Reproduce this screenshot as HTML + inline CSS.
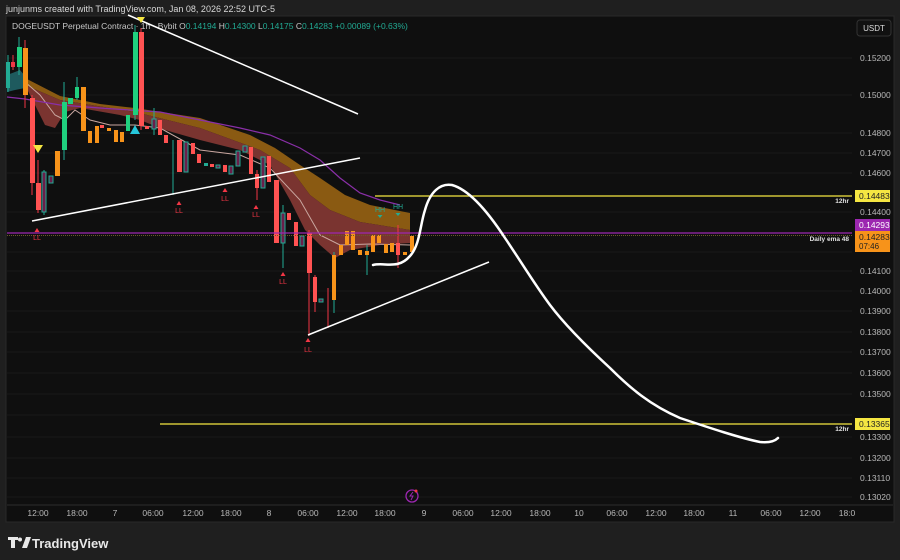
<!DOCTYPE html>
<html><head><meta charset="utf-8"><style>
html,body{margin:0;padding:0;width:900px;height:560px;background:#1f1f1f;overflow:hidden;font-family:"Liberation Sans",sans-serif}
svg{position:absolute;left:0;top:0}
</style></head><body>
<svg width="900" height="560" xmlns="http://www.w3.org/2000/svg" font-family="Liberation Sans, sans-serif">
<rect x="0" y="0" width="900" height="560" fill="#1f1f1f"/>
<text x="6" y="12" fill="#d8d8d8" font-size="9">junjunms created with TradingView.com, Jan 08, 2026 22:52 UTC-5</text>
<rect x="6" y="16" width="888" height="506" fill="#0f0f0f" stroke="#2a2a2a"/>
<line x1="7" y1="505" x2="893" y2="505" stroke="#2c2c2c"/>
<!-- grid -->
<g stroke="#191919" stroke-width="1">
<line x1="7" y1="58" x2="852" y2="58"/><line x1="7" y1="95" x2="852" y2="95"/><line x1="7" y1="133" x2="852" y2="133"/><line x1="7" y1="153" x2="852" y2="153"/><line x1="7" y1="173" x2="852" y2="173"/><line x1="7" y1="212" x2="852" y2="212"/><line x1="7" y1="252" x2="852" y2="252"/><line x1="7" y1="271" x2="852" y2="271"/><line x1="7" y1="291" x2="852" y2="291"/><line x1="7" y1="311" x2="852" y2="311"/><line x1="7" y1="332" x2="852" y2="332"/><line x1="7" y1="352" x2="852" y2="352"/><line x1="7" y1="373" x2="852" y2="373"/><line x1="7" y1="394" x2="852" y2="394"/><line x1="7" y1="415" x2="852" y2="415"/><line x1="7" y1="437" x2="852" y2="437"/><line x1="7" y1="458" x2="852" y2="458"/><line x1="7" y1="478" x2="852" y2="478"/><line x1="7" y1="497" x2="852" y2="497"/>
</g>
<text x="12" y="29" fill="#c8c8c8" font-size="8.5">DOGEUSDT Perpetual Contract · 1h · Bybit  O<tspan fill="#22ab94">0.14194</tspan> H<tspan fill="#22ab94">0.14300</tspan> L<tspan fill="#22ab94">0.14175</tspan> C<tspan fill="#22ab94">0.14283</tspan> <tspan fill="#22ab94">+0.00089 (+0.63%)</tspan></text>
<!-- bands -->
<path d="M7,75 L15,72 L20,70 L25,76 L25,88 L15,90 L7,92 Z" fill="#1e5a5e"/>
<path d="M25,78 L60,96 L100,104 L135,108 L200,118 L250,135 L275,148 L300,165 L320,178 L345,195 L370,205 L410,213 L410,230 L360,222 L330,210 L310,195 L290,168 L260,150 L200,128 L135,112 L60,100 L25,85 Z" fill="#8a5a12"/>
<path d="M25,85 L60,100 L135,112 L200,128 L260,150 L290,168 L310,195 L330,210 L360,222 L410,230 L410,243 L380,245 L350,250 L335,258 L320,245 L305,230 L290,200 L270,165 L240,150 L200,140 L165,130 L140,120 L120,115 L80,108 L65,112 L55,128 L45,125 L35,105 Z" fill="#7a3430"/>
<path d="M25,82 L40,95 L55,115 L65,120 L75,110 L90,120 L110,125 L135,125 L160,128 L200,150 L240,155 L270,168 L300,200 L320,235 L340,245 L370,244 L410,245" stroke="#c9a7a0" stroke-width="1" fill="none"/>
<path d="M7,97 L25,99 L60,105 L100,108 L130,110 L160,112 L200,120 L240,128 L270,135 L300,148 L320,160 L340,178 L360,193 L380,200 L400,205" stroke="#8a2fa8" stroke-width="1.2" fill="none"/>
<!-- candles -->
<g stroke-width="1">
<line x1="8" y1="55" x2="8" y2="92" stroke="#22ab94"/><rect x="6" y="62" width="4" height="26" fill="#22ab94"/>
<line x1="13" y1="55" x2="13" y2="70" stroke="#f23645"/><rect x="11" y="62" width="4" height="5" fill="#f23645"/>
<line x1="19" y1="37" x2="19" y2="75" stroke="#22ab94"/><rect x="17" y="47" width="5" height="20" fill="#1fd07e"/>
<line x1="25" y1="40" x2="25" y2="108" stroke="#f23645"/><rect x="23" y="48" width="5" height="47" fill="#f7931a"/>
<line x1="32" y1="95" x2="32" y2="195" stroke="#f23645"/><rect x="30" y="98" width="5" height="85" fill="#ff5252"/>
<line x1="38" y1="160" x2="38" y2="213" stroke="#f23645"/><rect x="36" y="183" width="5" height="27" fill="#ff5252"/>
<line x1="44" y1="170" x2="44" y2="215" stroke="#22ab94"/><rect x="42" y="172" width="4" height="40" fill="#6b1f4a" stroke="#22ab94"/>
<rect x="49" y="176" width="4" height="7" fill="#6b1f4a" stroke="#22ab94"/>
<rect x="55" y="151" width="5" height="25" fill="#f7931a"/>
<line x1="64" y1="82" x2="64" y2="160" stroke="#22ab94"/><rect x="62" y="102" width="5" height="48" fill="#1fd07e"/>
<rect x="68" y="98" width="5" height="6" fill="#1fd07e"/>
<line x1="77" y1="77" x2="77" y2="100" stroke="#22ab94"/><rect x="75" y="87" width="4" height="11" fill="#1fd07e"/>
<rect x="81" y="87" width="5" height="44" fill="#f7931a"/>
<rect x="88" y="131" width="4" height="12" fill="#f7931a"/>
<rect x="95" y="126" width="4" height="17" fill="#f7931a"/>
<rect x="100" y="125" width="4" height="3" fill="#ff5252"/>
<rect x="107" y="128" width="4" height="3" fill="#f7931a"/>
<rect x="114" y="130" width="4" height="12" fill="#f7931a"/>
<rect x="120" y="132" width="4" height="10" fill="#f7931a"/>
<rect x="126" y="115" width="4" height="16" fill="#1fd07e"/>
<line x1="135" y1="25" x2="135" y2="120" stroke="#22ab94"/><rect x="133" y="32" width="5" height="83" fill="#1fd07e"/>
<line x1="141" y1="28" x2="141" y2="130" stroke="#f23645"/><rect x="139" y="32" width="5" height="94" fill="#ff5252"/>
<rect x="145" y="126" width="4" height="3" fill="#ff5252"/>
<line x1="154" y1="108" x2="154" y2="135" stroke="#22ab94"/><rect x="152" y="119" width="4" height="10" fill="#6b1f4a" stroke="#22ab94"/>
<rect x="158" y="120" width="4" height="15" fill="#ff5252"/>
<rect x="164" y="135" width="4" height="8" fill="#ff5252"/>
<line x1="173" y1="140" x2="173" y2="195" stroke="#22ab94"/>
<rect x="177" y="140" width="5" height="32" fill="#ff5252"/>
<rect x="184" y="142" width="4" height="30" fill="#6b1f4a" stroke="#22ab94"/>
<rect x="191" y="143" width="4" height="11" fill="#ff5252"/>
<rect x="197" y="154" width="4" height="9" fill="#ff5252"/>
<rect x="204" y="163" width="4" height="3" fill="#22ab94"/>
<rect x="210" y="164" width="4" height="3" fill="#ff5252"/>
<rect x="216" y="165" width="4" height="3" fill="#6b1f4a" stroke="#22ab94"/>
<rect x="223" y="165" width="4" height="7" fill="#ff5252"/>
<rect x="229" y="166" width="4" height="8" fill="#6b1f4a" stroke="#22ab94"/>
<rect x="236" y="151" width="4" height="15" fill="#6b1f4a" stroke="#22ab94"/>
<rect x="243" y="146" width="4" height="6" fill="#6b1f4a" stroke="#22ab94"/>
<rect x="249" y="147" width="4" height="27" fill="#ff5252"/>
<line x1="257" y1="170" x2="257" y2="200" stroke="#f23645"/><rect x="255" y="174" width="4" height="14" fill="#ff5252"/>
<rect x="261" y="157" width="4" height="31" fill="#6b1f4a" stroke="#22ab94"/>
<rect x="267" y="156" width="4" height="26" fill="#ff5252"/>
<rect x="274" y="180" width="5" height="63" fill="#ff5252"/>
<line x1="283" y1="205" x2="283" y2="268" stroke="#22ab94"/><rect x="281" y="213" width="4" height="30" fill="#6b1f4a" stroke="#22ab94"/>
<rect x="287" y="213" width="4" height="7" fill="#ff5252"/>
<rect x="294" y="222" width="4" height="24" fill="#ff5252"/>
<rect x="300" y="236" width="4" height="10" fill="#6b1f4a" stroke="#22ab94"/>
<line x1="309" y1="230" x2="309" y2="336" stroke="#f23645"/><rect x="307" y="233" width="5" height="40" fill="#ff5252"/>
<line x1="315" y1="275" x2="315" y2="312" stroke="#f23645"/><rect x="313" y="277" width="4" height="25" fill="#ff5252"/>
<rect x="319" y="299" width="4" height="3" fill="#6b1f4a" stroke="#22ab94"/>
<line x1="328" y1="288" x2="328" y2="328" stroke="#f23645"/>
<line x1="334" y1="252" x2="334" y2="313" stroke="#22ab94"/><rect x="332" y="255" width="4" height="45" fill="#f7931a"/>
<rect x="339" y="245" width="4" height="10" fill="#f7931a"/>
<rect x="345" y="231" width="4" height="14" fill="#f7931a"/>
<rect x="351" y="231" width="4" height="19" fill="#f7931a"/>
<rect x="358" y="250" width="4" height="5" fill="#f7931a"/>
<line x1="367" y1="245" x2="367" y2="275" stroke="#22ab94"/><rect x="365" y="251" width="4" height="4" fill="#f7931a"/>
<rect x="371" y="235" width="4" height="17" fill="#f7931a"/>
<rect x="377" y="235" width="4" height="8" fill="#f7931a"/>
<rect x="384" y="244" width="4" height="9" fill="#f7931a"/>
<rect x="390" y="243" width="4" height="9" fill="#f7931a"/>
<line x1="398" y1="225" x2="398" y2="268" stroke="#f23645"/><rect x="396" y="243" width="4" height="12" fill="#ff5252"/>
<rect x="403" y="252" width="4" height="3" fill="#f7931a"/>
<rect x="410" y="236" width="4" height="16" fill="#f7931a"/>
</g>
<!-- levels -->
<line x1="7" y1="233" x2="852" y2="233" stroke="#9c27b0" stroke-width="1.3"/>
<line x1="7" y1="235.5" x2="852" y2="235.5" stroke="#6a5a2a" stroke-width="1" stroke-dasharray="1,1"/>
<line x1="375" y1="196" x2="852" y2="196" stroke="#f5e642" stroke-width="1.3"/>
<line x1="160" y1="424" x2="852" y2="424" stroke="#f5e642" stroke-width="1.3"/>
<!-- trend lines -->
<g stroke="#fff" stroke-width="1.5">
<line x1="128" y1="15" x2="358" y2="114"/>
<line x1="32" y1="221" x2="360" y2="158"/>
<line x1="308" y1="335" x2="489" y2="262"/>
</g>
<path d="M373,265 C385,262 398,270 410,256 C420,245 420,225 425,210 C430,192 440,183 452,185 C470,190 490,215 505,238 C520,260 535,285 550,305 C565,325 585,345 610,368 C630,388 650,405 680,418 C710,428 740,438 760,442 C770,443 775,441 778,438" stroke="#fff" stroke-width="2.5" fill="none" stroke-linecap="round"/>
<!-- markers -->
<g font-size="7" fill="#f23645" text-anchor="middle">
<path d="M37,228 l-2.5,4 h5z" fill="#f23645"/><text x="37" y="240">LL</text>
<path d="M179,201 l-2.5,4 h5z" fill="#f23645"/><text x="179" y="213">LL</text>
<path d="M225,188 l-2.5,4 h5z" fill="#f23645"/><text x="225" y="201">LL</text>
<path d="M256,205 l-2.5,4 h5z" fill="#f23645"/><text x="256" y="217">LL</text>
<path d="M283,272 l-2.5,4 h5z" fill="#f23645"/><text x="283" y="284">LL</text>
<path d="M308,338 l-2.5,4 h5z" fill="#f23645"/><text x="308" y="352">LL</text>
<text x="380" y="212" fill="#22ab94">HH</text><path d="M377.5,215 h5 l-2.5,3z" fill="#22ab94"/>
<text x="398" y="209" fill="#22ab94">HH</text><path d="M395.5,213 h5 l-2.5,3z" fill="#22ab94"/>
</g>
<path d="M33,145 h10 l-5,8z" fill="#f5e642"/>
<path d="M130,134 h10 l-5,-9z" fill="#26c6da"/>
<path d="M137,17 h8 l-4,6z" fill="#f5e642"/>
<!-- price axis -->
<rect x="857" y="20" width="34" height="16" rx="3" fill="#111" stroke="#333"/>
<text x="874" y="31" fill="#ddd" font-size="8" text-anchor="middle">USDT</text>
<g font-size="8.5" fill="#b8b8b8">
<text x="860" y="61">0.15200</text><text x="860" y="98">0.15000</text><text x="860" y="136">0.14800</text><text x="860" y="156">0.14700</text><text x="860" y="176">0.14600</text><text x="860" y="215">0.14400</text><text x="860" y="274">0.14100</text><text x="860" y="294">0.14000</text><text x="860" y="314">0.13900</text><text x="860" y="335">0.13800</text><text x="860" y="355">0.13700</text><text x="860" y="376">0.13600</text><text x="860" y="397">0.13500</text><text x="860" y="440">0.13300</text><text x="860" y="461">0.13200</text><text x="860" y="481">0.13110</text><text x="860" y="500">0.13020</text>
</g>
<rect x="855" y="190" width="35" height="12" fill="#f5e642"/><text x="859" y="199" font-size="8.5" fill="#222">0.14483</text>
<rect x="855" y="219" width="35" height="12" fill="#9c27b0"/><text x="859" y="228" font-size="8.5" fill="#fff">0.14293</text>
<rect x="855" y="231" width="35" height="21" fill="#f7931a"/><text x="859" y="240" font-size="8.5" fill="#222">0.14283</text><text x="859" y="249" font-size="8" fill="#222">07:46</text>
<rect x="855" y="418" width="35" height="12" fill="#f5e642"/><text x="859" y="427" font-size="8.5" fill="#222">0.13365</text>
<g font-size="6.5" fill="#e0e0e0" font-weight="bold" text-anchor="end">
<text x="849" y="203">12hr</text><text x="849" y="241">Daily ema 48</text><text x="849" y="431">12hr</text>
</g>
<!-- time axis -->
<g font-size="8.5" fill="#b8b8b8" text-anchor="middle">
<text x="38" y="516">12:00</text><text x="77" y="516">18:00</text><text x="115" y="516">7</text><text x="153" y="516">06:00</text><text x="193" y="516">12:00</text><text x="231" y="516">18:00</text><text x="269" y="516">8</text><text x="308" y="516">06:00</text><text x="347" y="516">12:00</text><text x="385" y="516">18:00</text><text x="424" y="516">9</text><text x="463" y="516">06:00</text><text x="501" y="516">12:00</text><text x="540" y="516">18:00</text><text x="579" y="516">10</text><text x="617" y="516">06:00</text><text x="656" y="516">12:00</text><text x="694" y="516">18:00</text><text x="733" y="516">11</text><text x="771" y="516">06:00</text><text x="810" y="516">12:00</text><text x="847" y="516">18:0</text>
</g>
<circle cx="412" cy="496" r="6" fill="none" stroke="#9c27b0" stroke-width="1.3"/>
<path d="M413,492 l-3,4 h3 l-2,4" stroke="#9c27b0" stroke-width="1" fill="none"/>
<circle cx="416" cy="491" r="1.5" fill="#f23645"/>
<!-- logo -->
<g fill="#e8e8e8">
<path d="M8,537 h10 v3 h-3 v8 h-4 v-8 h-3z"/>
<circle cx="20" cy="539.5" r="2"/>
<path d="M22,548 l4,-11 h5 l-4,11z"/>
</g>
<text x="32" y="548" fill="#e8e8e8" font-size="13" font-weight="bold">TradingView</text>
</svg>
</body></html>
